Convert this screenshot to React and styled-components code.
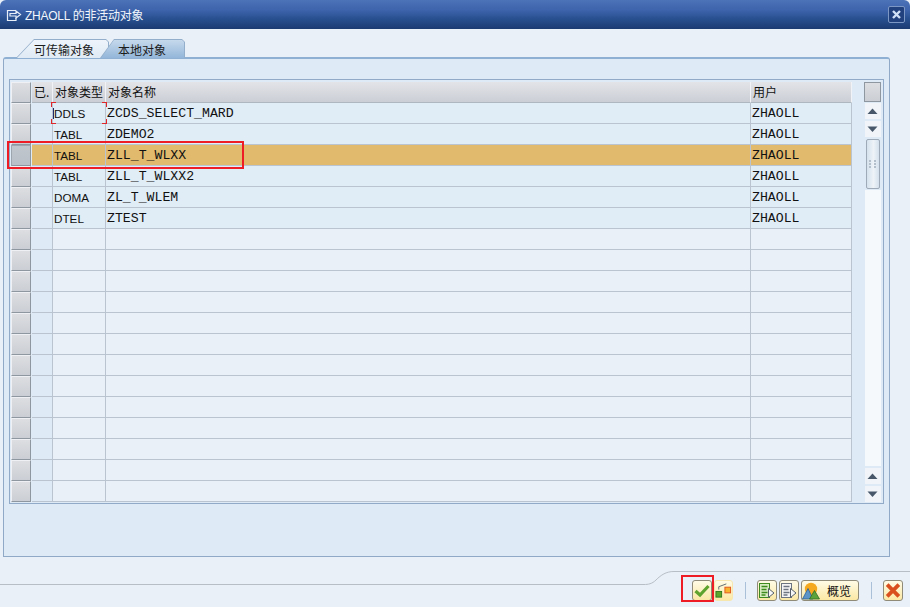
import React from 'react';
import styled, { createGlobalStyle } from 'styled-components';

const GlobalStyle = createGlobalStyle`
  html, body {
    margin: 0;
    padding: 0;
    background: #eaf0f8;
  }
`;

const cjk = `"Noto Sans CJK SC", "Liberation Sans", sans-serif`;
const sans = `"Liberation Sans", "Noto Sans CJK SC", sans-serif`;
const mono = `"Liberation Mono", "Noto Sans CJK SC", monospace`;

const Window = styled.div`
  position: relative;
  width: 910px;
  height: 607px;
  overflow: hidden;
  display: flex;
  flex-direction: column;
  background: #eaf0f8;
`;

const TitleBar = styled.div`
  height: 29px;
  box-sizing: border-box;
  padding: 0 5px 0 6px;
  display: flex;
  align-items: center;
  gap: 3px;
  border-radius: 6px 6px 0 0;
  background: linear-gradient(#4c72b8 0%, #3d64ac 35%, #28508f 65%, #1b3a72 100%);
`;

const TitleText = styled.div`
  flex: 1;
  font: 12px ${sans};
  letter-spacing: -0.25px;
  color: #f2f6fc;
`;

const CloseButton = styled.div`
  width: 15px;
  height: 15px;
  display: flex;
  align-items: center;
  justify-content: center;
  border: 1px solid #7d97c4;
  border-radius: 2px;
  background: #21407e;
`;

const Body = styled.div`
  flex: 1;
  padding: 10px 20px 0 3px;
  display: flex;
  flex-direction: column;
`;

const TabStrip = styled.div`
  height: 18px;
  padding-left: 13px;
  display: flex;
`;

const TabEdge = styled.div`
  position: relative;
  height: 19px;
  margin-left: ${(p) => (p.$active ? '-9px' : '0')};
  z-index: ${(p) => (p.$active ? 2 : 1)};
  width: ${(p) => p.$width}px;
  background: #93aecb;
  clip-path: polygon(${(p) => p.$slant}px 0, calc(100% - 3px) 0, 100% 3px, 100% 100%, 0 100%);
`;

const TabFace = styled.div`
  position: absolute;
  inset: 1px 1px 0 1px;
  display: flex;
  align-items: center;
  justify-content: flex-end;
  padding-right: ${(p) => (p.$active ? '18px' : '14px')};
  font: 12px ${cjk};
  color: #1c1c1c;
  background: ${(p) => (p.$active ? 'linear-gradient(#c6d9ec, #93b6d9)' : 'linear-gradient(#eef4fa, #dfeaf5)')};
  clip-path: polygon(${(p) => p.$slant}px 0, calc(100% - 2px) 0, 100% 2px, 100% 100%, 0 100%);
`;

const Panel = styled.div`
  width: 887px;
  height: 500px;
  box-sizing: border-box;
  padding: 20px 5px 0 5px;
  background: #deeaf5;
  border: 1px solid #8fa9c6;
  border-top: 2px solid #8fb0d2;
  border-radius: 3px 3px 0 0;
`;

const TableFrame = styled.div`
  height: 425px;
  box-sizing: border-box;
  padding: 2px 1px 0 1px;
  display: flex;
  border: 1px solid #91aac8;
`;

const Grid = styled.div`
  width: 841px;
  display: flex;
  flex-direction: column;
`;

const Row = styled.div`
  display: grid;
  grid-template-columns: 21px 21px 53px 645px 101px;
  height: 21px;
`;

const RowHead = styled.div`
  box-sizing: border-box;
  margin-right: 1px;
  border: 1px solid ${(p) => (p.$selected ? '#9da5ae' : '#eef0f3')};
  border-right-color: #8e969f;
  border-bottom-color: #8e969f;
  background: ${(p) => (p.$selected ? 'linear-gradient(#c0c6cc, #b9c0c8)' : 'linear-gradient(#dcdee1, #cbced4)')};
`;

const HeadCell = styled.div`
  box-sizing: border-box;
  padding: 0 1px 1px 2px;
  overflow: hidden;
  white-space: nowrap;
  display: flex;
  align-items: center;
  font: 12px ${cjk};
  color: #111;
  border-right: 1px solid #f0f2f5;
  border-bottom: 1px solid #aeb6bf;
  background: linear-gradient(#e2e4e8, #cbced5);
`;

const bg = (p) => {
  if (p.$selected) return '#e1ba6e';
  if (p.$marker) return '#deeaf5';
  return p.$filled ? '#e0ecf6' : '#e9f0f7';
};

const Cell = styled.div`
  box-sizing: border-box;
  padding: 1px 0 0 1px;
  position: relative;
  display: flex;
  align-items: center;
  overflow: ${(p) => (p.$focus ? 'visible' : 'hidden')};
  white-space: nowrap;
  font: ${(p) => (p.$mono ? `13.2px ${mono}` : `11.7px ${sans}`)};
  color: #111;
  background: ${bg};
  border-right: 1px solid #bac4d0;
  border-bottom: 1px solid #bac4d0;
`;

const FocusMark = styled.span`
  position: absolute;
  left: -2px;
  top: -1px;
  width: 56px;
  height: 22px;
  z-index: 3;
  pointer-events: none;
  background:
    linear-gradient(#e1262a, #e1262a) 0 0 / 5px 1px no-repeat,
    linear-gradient(#e1262a, #e1262a) 0 0 / 1px 5px no-repeat,
    linear-gradient(#e1262a, #e1262a) 100% 0 / 5px 1px no-repeat,
    linear-gradient(#e1262a, #e1262a) 100% 0 / 1px 5px no-repeat,
    linear-gradient(#e1262a, #e1262a) 0 100% / 5px 1px no-repeat,
    linear-gradient(#e1262a, #e1262a) 0 100% / 1px 5px no-repeat,
    linear-gradient(#e1262a, #e1262a) 100% 100% / 5px 1px no-repeat,
    linear-gradient(#e1262a, #e1262a) 100% 100% / 1px 5px no-repeat;

  &::after {
    content: '';
    position: absolute;
    left: 2px;
    top: 6px;
    width: 1px;
    height: 11px;
    background: #222a6a;
  }
`;

const ScrollColumn = styled.div`
  margin-left: 11px;
  width: 21px;
  display: flex;
  flex-direction: column;
  align-items: center;
`;

const ScrollCorner = styled.div`
  width: 17px;
  height: 20px;
  box-sizing: border-box;
  flex: none;
  margin-bottom: 1px;
  border: 1px solid #8e969f;
  background: linear-gradient(#dcdee1, #cbced4);
`;

const ScrollButton = styled.div`
  width: 16px;
  height: 16px;
  flex: none;
  margin-bottom: 2px;
  display: flex;
  align-items: center;
  justify-content: center;
  background: #f1f5fa;
`;

const Thumb = styled.div`
  width: 14px;
  height: 50px;
  flex: none;
  box-sizing: border-box;
  margin-bottom: 1px;
  display: flex;
  align-items: center;
  justify-content: center;
  border: 1px solid #9eaab8;
  border-radius: 2px;
  background: linear-gradient(90deg, #d5e2ed, #eef3f8 55%, #d3e0ec);
`;

const Track = styled.div`
  width: 16px;
  height: 276px;
  flex: none;
  margin-bottom: 2px;
  background: #f6f9fc;
`;

const Footer = styled.div`
  height: 50px;
  display: flex;
  align-items: flex-start;
`;

const FooterRule = styled.div`
  flex: 1;
  height: 27px;
  border-bottom: 1px solid #b7bec6;
`;

const FooterCurve = styled.svg`
  width: 30px;
  height: 14px;
  flex: none;
  margin-top: 14px;
`;

const Tools = styled.div`
  width: 236px;
  height: 36px;
  box-sizing: border-box;
  margin-top: 14px;
  padding: 8px 7px 0 18px;
  display: flex;
  align-items: flex-start;
  border-top: 1px solid #b7bec6;
`;

const ToolButton = styled.div`
  height: 21px;
  width: ${(p) => p.$width || 20}px;
  box-sizing: border-box;
  flex: none;
  margin-left: ${(p) => p.$gap || 0}px;
  display: flex;
  align-items: center;
  border: 1px solid ${(p) => (p.$borderless ? '#f6e7ae' : '#8f8b78')};
  border-radius: 3px;
  font: 12px ${cjk};
  color: #111;
  background: linear-gradient(#fffbe6, #fbe8a4);
`;

const ButtonLabel = styled.span`
  margin-left: 7px;
`;

const Separator = styled.div`
  width: 1px;
  height: 17px;
  flex: none;
  margin: 2px 11px 0 12px;
  background: #a9c0d8;
`;

const Callout = styled.div`
  position: absolute;
  left: ${(p) => p.$x}px;
  top: ${(p) => p.$y}px;
  width: ${(p) => p.$w}px;
  height: ${(p) => p.$h}px;
  box-sizing: border-box;
  border: 2px solid #ee1c25;
  pointer-events: none;
  z-index: 5;
`;

const rows = [
  ['DDLS', 'ZCDS_SELECT_MARD', 'ZHAOLL'],
  ['TABL', 'ZDEMO2', 'ZHAOLL'],
  ['TABL', 'ZLL_T_WLXX', 'ZHAOLL'],
  ['TABL', 'ZLL_T_WLXX2', 'ZHAOLL'],
  ['DOMA', 'ZL_T_WLEM', 'ZHAOLL'],
  ['DTEL', 'ZTEST', 'ZHAOLL'],
];

const ArrowUp = () => (
  <svg width="11" height="7" viewBox="0 0 11 7">
    <path d="M5.5 0.5 L10.5 6 H0.5 Z" fill="#48586a" />
  </svg>
);

const ArrowDown = () => (
  <svg width="11" height="7" viewBox="0 0 11 7">
    <path d="M0.5 0.5 H10.5 L5.5 6 Z" fill="#48586a" />
  </svg>
);

const Grip = () => (
  <svg width="7" height="8" viewBox="0 0 7 8">
    <g fill="#b3bfca">
      <rect x="0" y="0" width="2" height="2" />
      <rect x="5" y="0" width="2" height="2" />
      <rect x="0" y="3" width="2" height="2" />
      <rect x="5" y="3" width="2" height="2" />
      <rect x="0" y="6" width="2" height="2" />
      <rect x="5" y="6" width="2" height="2" />
    </g>
  </svg>
);

const WindowIcon = () => (
  <svg width="16" height="14" viewBox="0 0 16 14" fill="none" stroke="#e8eef8" strokeWidth="1.2">
    <path d="M10 2.5 H1.5 V12.5 H10 V10" />
    <path d="M4 5.5 H10 V3 L14.5 6.5 L10 10 V8 H4 Z" />
  </svg>
);

const CloseIcon = () => (
  <svg width="11" height="11" viewBox="0 0 11 11">
    <path d="M2 2 L9 9 M9 2 L2 9" stroke="#cfe0f7" strokeWidth="2.4" />
  </svg>
);

const CheckIcon = () => (
  <svg width="18" height="15" viewBox="0 0 17 15">
    <path d="M2 8 L6.5 12 L15 3" fill="none" stroke="#5fa32f" strokeWidth="3.2" />
  </svg>
);

const HierarchyIcon = () => (
  <svg width="17" height="17" viewBox="0 0 18 18">
    <path d="M4 8 V5 L12 2" fill="none" stroke="#5b6770" strokeWidth="1" />
    <rect x="1" y="10" width="6" height="6" fill="#5da62c" stroke="#2e7a1c" />
    <rect x="10.5" y="5.5" width="6" height="6" fill="#f7b32e" stroke="#e0561c" />
  </svg>
);

const ListArrowIcon = ({ color, fill }) => (
  <svg width="17" height="18" viewBox="0 0 17 18">
    <rect x="1.5" y="1.5" width="10" height="14" fill={fill} stroke={color} />
    <path d="M3.5 4.5 H9.5 M3.5 7.5 H8.5 M3.5 10.5 H9.5 M3.5 13 H7.5" stroke={color} strokeWidth="1.6" />
    <path d="M10.5 6.5 L16 11 L10.5 15.5 Z" fill="#f7f7f7" stroke="#57606a" />
  </svg>
);

const LandscapeIcon = () => (
  <svg width="18" height="18" viewBox="0 0 18 18">
    <circle cx="9" cy="7" r="6.2" fill="#f5a91f" />
    <path d="M0.5 17 L6 6.5 L11 17 Z" fill="#5c94c8" stroke="#2f5f94" strokeWidth="0.8" />
    <path d="M7.5 17 L12.5 8.5 L17.5 17 Z" fill="#5da33c" stroke="#2f6d24" strokeWidth="0.8" />
  </svg>
);

const CancelIcon = () => (
  <svg width="18" height="17" viewBox="0 0 16 16">
    <path d="M2.5 2.5 L13.5 13.5 M13.5 2.5 L2.5 13.5" stroke="#d9501e" strokeWidth="3.6" />
  </svg>
);

const App = () => (
  <Window>
    <GlobalStyle />
    <TitleBar>
      <WindowIcon />
      <TitleText>ZHAOLL 的非活动对象</TitleText>
      <CloseButton>
        <CloseIcon />
      </CloseButton>
    </TitleBar>
    <Body>
      <TabStrip>
        <TabEdge $width={93} $slant={18}>
          <TabFace $slant={17}>可传输对象</TabFace>
        </TabEdge>
        <TabEdge $active $width={85} $slant={14}>
          <TabFace $active $slant={13}>本地对象</TabFace>
        </TabEdge>
      </TabStrip>
      <Panel>
        <TableFrame>
          <Grid>
            <Row>
              <RowHead />
              <HeadCell>已.</HeadCell>
              <HeadCell>对象类型</HeadCell>
              <HeadCell>对象名称</HeadCell>
              <HeadCell>用户</HeadCell>
            </Row>
            {Array.from({ length: 19 }, (_, i) => {
              const row = rows[i];
              const selected = i === 2;
              return (
                <Row key={i}>
                  <RowHead $selected={selected} />
                  <Cell $marker $selected={selected} />
                  <Cell $filled={!!row} $selected={selected} $focus={i === 0}>
                    {i === 0 && <FocusMark />}
                    {row && row[0]}
                  </Cell>
                  <Cell $mono $filled={!!row} $selected={selected}>{row && row[1]}</Cell>
                  <Cell $mono $filled={!!row} $selected={selected}>{row && row[2]}</Cell>
                </Row>
              );
            })}
          </Grid>
          <ScrollColumn>
            <ScrollCorner />
            <ScrollButton><ArrowUp /></ScrollButton>
            <ScrollButton><ArrowDown /></ScrollButton>
            <Thumb><Grip /></Thumb>
            <Track />
            <ScrollButton><ArrowUp /></ScrollButton>
            <ScrollButton><ArrowDown /></ScrollButton>
          </ScrollColumn>
        </TableFrame>
      </Panel>
    </Body>
    <Footer>
      <FooterRule />
      <FooterCurve viewBox="0 0 30 14">
        <path d="M0 13.5 C4 13.5 8 13 12 9 C17 4 22 0.5 30 0.5" fill="none" stroke="#b7bec6" />
      </FooterCurve>
      <Tools>
        <ToolButton $width={20}><CheckIcon /></ToolButton>
        <ToolButton $borderless $gap={2} $width={19}><HierarchyIcon /></ToolButton>
        <Separator />
        <ToolButton $width={20}><ListArrowIcon color="#3f8a1e" fill="#d7ecc0" /></ToolButton>
        <ToolButton $width={20} $gap={2}><ListArrowIcon color="#6d7580" fill="#f4f4f4" /></ToolButton>
        <ToolButton $width={58} $gap={2}>
          <LandscapeIcon />
          <ButtonLabel>概览</ButtonLabel>
        </ToolButton>
        <Separator />
        <ToolButton $width={20}><CancelIcon /></ToolButton>
      </Tools>
    </Footer>
    <Callout $x={7} $y={141} $w={237} $h={28} />
    <Callout $x={681} $y={575} $w={33} $h={27} />
  </Window>
);

export default App;
